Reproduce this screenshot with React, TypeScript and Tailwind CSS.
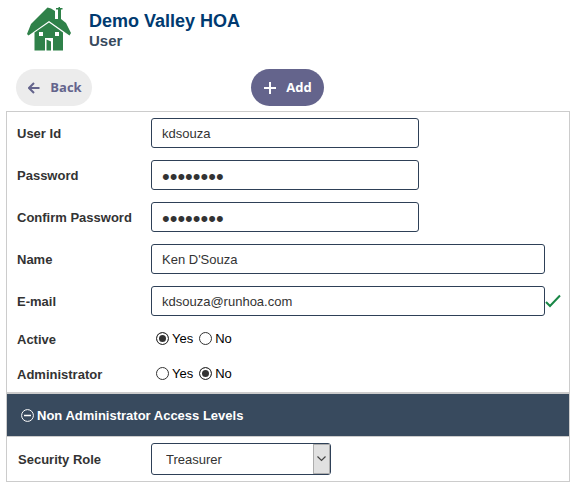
import type { ReactNode } from "react";

const inputStyle =
  "h-[30px] rounded-[3px] border border-[#2e4057] bg-white px-[10px] text-[#333] outline-none";

function HouseLogo() {
  return (
    <svg
      viewBox="0 0 44 44"
      className="h-[44px] w-[44px] shrink-0"
      aria-hidden="true"
    >
      <path
        fill="#2f8149"
        d="M0 27 4 17 20.500.500 24 1.500 28 4V12h3V2h3v10l5 4 5 10-1.500 2.500L22 14 1.500 28.500Z"
      />
      <path fill="#2f8149" d="M29 1h2.500V0h1.500v1h2.500v1.500H29Z" />
      <path fill="#2f8149" d="M22 15.500 36 25.500v18H7.500v-18Z" />
      <path
        fill="#fff"
        d="M18 44V31h8v13ZM12 25h4v4h-4ZM28 25h4v4h-4Z"
      />
      <path fill="#2f8149" d="m19.500 32.500 4.500 2v9h-4.500Z" />
    </svg>
  );
}

function ArrowIcon() {
  return (
    <svg viewBox="0 0 12 12" className="h-3 w-3" aria-hidden="true">
      <path
        d="M11.500 6H1.500M6 1 1 6l5 5"
        fill="none"
        stroke="currentColor"
        strokeWidth="2"
      />
    </svg>
  );
}

function PlusIcon() {
  return (
    <svg viewBox="0 0 12 12" className="h-3 w-3" aria-hidden="true">
      <path d="M6 0v12M0 6h12" stroke="currentColor" strokeWidth="2" />
    </svg>
  );
}

function Field({
  id,
  label,
  children,
}: {
  id: string;
  label: string;
  children: ReactNode;
}) {
  return (
    <div className="flex h-[42px] items-center">
      <label htmlFor={id} className="w-[134px] shrink-0 pt-px font-bold">
        {label}
      </label>
      {children}
    </div>
  );
}

function YesNo({
  name,
  label,
  value,
}: {
  name: string;
  label: string;
  value: "Yes" | "No";
}) {
  return (
    <div
      role="radiogroup"
      aria-label={label}
      className="flex h-[35px] items-center"
    >
      <span className="w-[134px] shrink-0 font-bold">{label}</span>
      <div className="flex gap-[6px] pb-[2px] pl-[5px] text-black">
        {["Yes", "No"].map((option) => (
          <label key={option} className="flex items-center gap-[3px]">
            <input
              type="radio"
              name={name}
              defaultChecked={option === value}
              className="h-[13px] w-[13px] appearance-none rounded-full border border-[#333] bg-white checked:bg-[#333] checked:shadow-[inset_0_0_0_2px_white]"
            />
            {option}
          </label>
        ))}
      </div>
    </div>
  );
}

export default function App() {
  return (
    <div className="bg-white px-[6px] pr-2 pb-4 font-['Liberation_Sans',Arial,sans-serif] text-[13px] text-[#333]">
      <header className="flex gap-[18px] pt-[7px] pl-[21px]">
        <HouseLogo />
        <div className="pt-[3px] font-bold">
          <h1 className="text-[18px] leading-[22px] text-[#003a70]">
            Demo Valley HOA
          </h1>
          <p className="text-[15px] leading-[18px] text-[#384a5e]">User</p>
        </div>
      </header>

      <div className="mt-[18px] mb-[5px] grid grid-cols-[1fr_auto_1fr] px-[10px] pr-3 font-['Open_Sans','Noto_Sans',sans-serif] text-[13px] font-bold">
        <button
          type="button"
          className="flex h-[37px] w-[76px] items-center justify-center gap-[10px] rounded-full bg-[#ececec] pt-px pl-[2px] text-[#64648c]"
        >
          <ArrowIcon />
          Back
        </button>
        <button
          type="button"
          className="flex h-[37px] w-[73px] items-center justify-center gap-[10px] rounded-full bg-[#64648c] pt-px pl-[2px] text-white"
        >
          <PlusIcon />
          Add
        </button>
      </div>

      <form className="border border-[#ccc]">
        <div className="px-[10px]">
          <Field id="userId" label="User Id">
            <input
              id="userId"
              type="text"
              defaultValue="kdsouza"
              className={`${inputStyle} w-[268px]`}
            />
          </Field>
          <Field id="password" label="Password">
            <input
              id="password"
              type="password"
              defaultValue="password"
              className={`${inputStyle} w-[268px] pt-[2px] text-[22px]`}
            />
          </Field>
          <Field id="confirmPassword" label="Confirm Password">
            <input
              id="confirmPassword"
              type="password"
              defaultValue="password"
              className={`${inputStyle} w-[268px] pt-[2px] text-[22px]`}
            />
          </Field>
          <Field id="name" label="Name">
            <input
              id="name"
              type="text"
              defaultValue="Ken D'Souza"
              className={`${inputStyle} mr-[14px] min-w-0 flex-1`}
            />
          </Field>
          <Field id="email" label="E-mail">
            <input
              id="email"
              type="email"
              defaultValue="kdsouza@runhoa.com"
              className={`${inputStyle} min-w-0 flex-1`}
            />
            <svg
              viewBox="0 0 16 14"
              className="-mr-[2px] h-[14px] w-4 shrink-0"
              role="img"
              aria-label="Valid"
            >
              <path
                d="m1 8 4 4L15 1.500"
                fill="none"
                stroke="#198746"
                strokeWidth="2"
              />
            </svg>
          </Field>
          <YesNo name="active" label="Active" value="Yes" />
          <YesNo name="administrator" label="Administrator" value="No" />
        </div>

        <h2 className="border-t-2 border-b border-[#ccc] bg-[#384a5e] font-bold text-white">
          <button
            type="button"
            aria-expanded="true"
            className="flex h-[42px] w-full items-center gap-[3px] pt-px pl-[14px]"
          >
            <svg viewBox="0 0 13 13" className="h-[13px] w-[13px]" aria-hidden="true">
              <circle
                cx="6.500"
                cy="6.500"
                r="5.900"
                fill="none"
                stroke="currentColor"
              />
              <path d="M3 6.500h7" stroke="currentColor" strokeWidth="1.500" />
            </svg>
            Non Administrator Access Levels
          </button>
        </h2>

        <div className="flex h-[44px] items-center px-[11px]">
          <label htmlFor="securityRole" className="w-[133px] shrink-0 pt-px font-bold">
            Security Role
          </label>
          <div className="relative">
            <select
              id="securityRole"
              defaultValue="Treasurer"
              className="block h-8 w-[180px] appearance-none rounded-[3px] border border-[#2e4057] bg-white pt-px pl-[14px] text-[#333] outline-none"
            >
              <option>Treasurer</option>
            </select>
            <span className="pointer-events-none absolute inset-y-px right-px flex w-[17px] items-center justify-center border border-[#adadad] bg-[#e1e1e1]">
              <svg viewBox="0 0 9 6" className="h-[6px] w-[9px]" aria-hidden="true">
                <path d="m.5.5 4 4 4-4" fill="none" stroke="#444" strokeWidth="1.200" />
              </svg>
            </span>
          </div>
        </div>
      </form>
    </div>
  );
}
